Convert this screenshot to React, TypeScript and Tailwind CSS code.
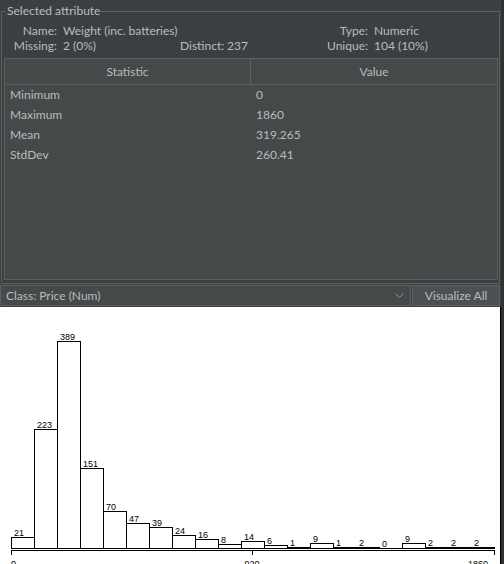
const counts = [21, 223, 389, 151, 70, 47, 39, 24, 16, 8, 14, 6, 1, 9, 1, 2, 0, 9, 2, 2, 2];

function Histogram() {
  const max = Math.max(...counts);
  const base = 241; // bar bottom row inside the svg
  return (
    <svg width="500" height="257" className="block" shapeRendering="crispEdges">
      {counts.map((c, i) => {
        const x0 = 11 + i * 23;
        const x1 = x0 + 23;
        const top = base - Math.round((c * 207) / max);
        return (
          <g key={i}>
            <path
              d={`M${x0 + 0.5} ${base + 0.5} V${top + 0.5} H${x1 + 0.5} V${base + 0.5} Z`}
              fill="white"
              stroke="black"
              strokeWidth="1"
            />
            <text
              x={x0 + 3}
              y={top - 1.5}
              fontSize="9"
              fontFamily="'Liberation Sans', Arial, sans-serif"
              fill="black"
            >
              {c}
            </text>
          </g>
        );
      })}
      <path d="M11 243.5 H495 M11.5 243 V248 M252.5 243 V248 M494.5 243 V248" stroke="black" strokeWidth="1" />
      <text x="11" y="259.5" fontSize="9" fontFamily="'Liberation Sans', Arial, sans-serif">0</text>
      <text x="252" y="259.5" fontSize="9" textAnchor="middle" fontFamily="'Liberation Sans', Arial, sans-serif">920</text>
      <text x="488" y="259.5" fontSize="9" textAnchor="end" fontFamily="'Liberation Sans', Arial, sans-serif">1860</text>
    </svg>
  );
}

const rows = [
  ["Minimum", "0"],
  ["Maximum", "1860"],
  ["Mean", "319.265"],
  ["StdDev", "260.41"],
];

export default function App() {
  return (
    <div className="flex w-[504px] h-[564px] overflow-hidden bg-[#3c3f41] text-[12px] text-[#bbbbbb] font-['Lato','Noto_Sans',sans-serif]">
      <div className="flex flex-col w-[501px]">
        <fieldset className="ml-[1px] mt-[3px] w-[499px] border border-[#5e6060] pb-[3px]">
          <legend className="ml-[4px] px-[1px] leading-[16px]">Selected attribute</legend>
          <div className="grid grid-cols-[55px_111px_41px_89px_46px_1fr] gap-x-[6px] pt-[4px] leading-[15px]">
            <div className="text-right">Name:</div>
            <div className="col-span-3 whitespace-nowrap">Weight (inc. batteries)</div>
            <div className="text-right">Type:</div>
            <div>Numeric</div>
            <div className="text-right">Missing:</div>
            <div>2 (0%)</div>
            <div className="text-right">Distinct:</div>
            <div>237</div>
            <div className="text-right whitespace-nowrap">Unique:</div>
            <div>104 (10%)</div>
          </div>
          <div className="ml-[2px] mr-[1px] mt-[5px] h-[222px] border border-[#5e6060] bg-[#45494a]">
            <div className="flex h-[26px] border-b border-[#5e6060]">
              <div className="w-[246px] border-r border-[#5e6060] flex items-center justify-center">Statistic</div>
              <div className="flex-1 flex items-center justify-center">Value</div>
            </div>
            {rows.map(([k, v]) => (
              <div key={k} className="flex h-[20px] items-center">
                <div className="w-[246px] pl-[5px]">{k}</div>
                <div className="flex-1 pl-[5px]">{v}</div>
              </div>
            ))}
          </div>
        </fieldset>
        <div className="flex mt-[1px] h-[22px] gap-[1px]">
          <div className="flex w-[411px] items-center justify-between border border-[#5e6060] bg-[#45494a] pl-[5px] pr-[6px]">
            <span>Class: Price (Num)</span>
            <svg width="9" height="6" viewBox="0 0 9 6">
              <path d="M0.5 0.5 L4.5 4.5 L8.5 0.5" fill="none" stroke="#8c8f91" strokeWidth="1" />
            </svg>
          </div>
          <div className="flex w-[88px] items-center justify-center border border-[#5e6060] bg-[#4c5052]">
            Visualize All
          </div>
        </div>
        <div className="mt-[1px] flex-1 bg-white border-r border-black">
          <Histogram />
        </div>
      </div>
      <div className="flex-1 bg-[#2f3133]" />
    </div>
  );
}
